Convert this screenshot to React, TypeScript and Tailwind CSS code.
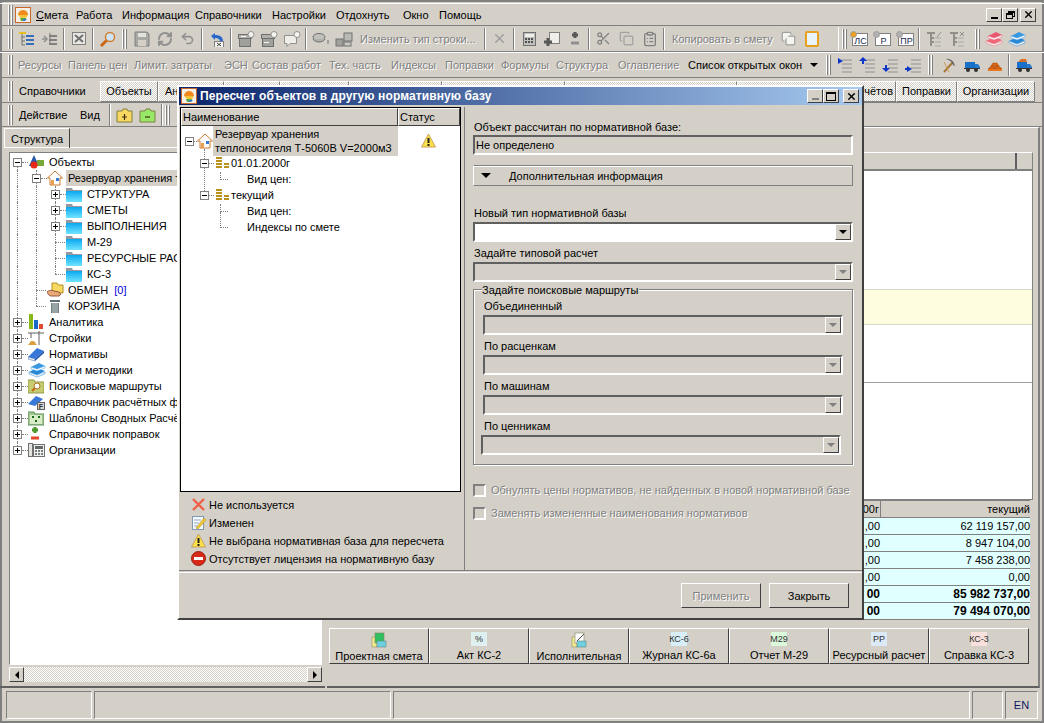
import type { ReactNode } from "react"
import { Scissors, Undo2, RefreshCw, X, Copy, ClipboardList } from "lucide-react"

const raised = "border border-t-white border-l-white border-r-[#404040] border-b-[#404040]"
const sunken = "border border-t-[#808080] border-l-[#808080] border-r-white border-b-white"
const off = "text-[#808080] [text-shadow:1px_1px_0_#fff]"

function Svg({ children, w = 16, h = 16 }: { children: ReactNode; w?: number; h?: number }) {
  return (
    <svg width={w} height={h} viewBox={`0 0 ${w} ${h}`} className="shrink-0">
      {children}
    </svg>
  )
}

const Logo = () => (
  <Svg>
    <rect x="0.5" y="0.5" width="15" height="15" fill="#f4f0e8" stroke="#c8682c" />
    <path d="M3 8a5 5 0 0 1 10 0z" fill="#f08a1c" />
    <path d="M3 8h10l-2 3H6z" fill="#f6c23a" />
    <path d="M5 11h6l-1 3H6z" fill="#58a848" />
    <path d="M8 12h4l-2 2H8z" fill="#3a78c8" />
  </Svg>
)

const TreeLines = ({ on }: { on?: boolean }) => (
  <Svg w={18}>
    {on ? <rect x="1" y="1" width="7" height="2" fill="#e8c020" /> : <path d="M1 8h5M3 5l3 3-3 3" stroke="#909090" fill="none" strokeWidth="1.5" />}
    <path d={on ? "M4 3v11M4 6h3M4 10h3M4 14h3" : "M9 2v12"} stroke="#707070" fill="none" />
    <path d="M8 5h8M8 9h8M8 13h8" stroke={on ? "#3870b8" : "#808080"} strokeWidth="2" />
  </Svg>
)

const ExcelGrey = () => (
  <Svg w={14}>
    <rect x="0.5" y="1.5" width="13" height="12" fill="#e8e6e0" stroke="#808080" />
    <path d="M3 4l8 7M11 4l-8 7" stroke="#707070" strokeWidth="2" />
  </Svg>
)

const Magnifier = () => (
  <Svg w={18}>
    <circle cx="11" cy="6" r="4.5" fill="#cfe4f4" stroke="#d08030" strokeWidth="1.5" />
    <path d="M7.5 9.5L2 15" stroke="#c86818" strokeWidth="3" />
  </Svg>
)

const Floppy = () => (
  <Svg>
    <path d="M1 1h12l2 2v12H1z" fill="#a8a8a4" stroke="#808080" />
    <rect x="4" y="2" width="8" height="4" fill="#e4e2dc" />
    <rect x="4" y="9" width="8" height="6" fill="#d4d0c8" />
  </Svg>
)

const UndoBlue = () => (
  <Svg w={18}>
    <path d="M3 5l4-3v2c5 0 8 2 8 6l-3 1c0-3-2-4-5-4v2z" fill="#2868c8" />
    <rect x="6.5" y="10.5" width="9" height="6" fill="#f4f4f0" stroke="#808080" />
    <path d="M9 12l4 3M13 12l-4 3" stroke="#404040" />
  </Svg>
)

const GearBox = ({ mark }: { mark: string }) => (
  <Svg w={18}>
    <rect x="1.5" y="3.5" width="13" height="4" fill="#b0b0ac" stroke="#707070" />
    <rect x="2.5" y="7.5" width="11" height="8" fill="#a0a09c" stroke="#707070" />
    <circle cx="14" cy="3.5" r="3" fill="#f4f4f0" stroke="#909090" />
    <path d={mark} stroke="#f8f8f4" />
  </Svg>
)

const BubbleGear = () => (
  <Svg w={18}>
    <path d="M1.5 4.5h12v8H7l-3 3v-3H1.5z" fill="#f0eee8" stroke="#909090" />
    <circle cx="14" cy="3.5" r="3" fill="#f4f4f0" stroke="#909090" />
  </Svg>
)

const Stamp = () => (
  <Svg w={18}>
    <ellipse cx="7" cy="6" rx="6" ry="3.5" fill="#c0c0bc" stroke="#707070" />
    <path d="M1 8c2 4 10 4 12 0" fill="#b0b0ac" stroke="#707070" />
    <path d="M16 9v4" stroke="#707070" />
  </Svg>
)

const Cubes = () => (
  <Svg w={18}>
    <rect x="1" y="8" width="7" height="7" fill="#a0a09c" stroke="#707070" />
    <rect x="9" y="2" width="8" height="8" fill="#b8b8b4" stroke="#707070" />
    <rect x="9" y="11" width="7" height="4" fill="#c8c8c4" stroke="#707070" />
  </Svg>
)

const Calc = () => (
  <Svg w={18}>
    <rect x="3.5" y="1.5" width="12" height="13" fill="#c0c0bc" stroke="#707070" />
    <rect x="5" y="3" width="9" height="3" fill="#f0eee8" />
    <path d="M5 8h2M8 8h2M11 8h2M5 11h2M8 11h2M11 11h2" stroke="#505050" strokeWidth="2" />
  </Svg>
)

const DocPlus = () => (
  <Svg w={18}>
    <rect x="6.5" y="1.5" width="10" height="11" fill="#f0eee8" stroke="#808080" />
    <path d="M1 11h8M5 7v8" stroke="#585858" strokeWidth="3" />
  </Svg>
)

const PlusMinus = ({ on }: { on?: boolean }) => (
  <Svg w={14}>
    <path d="M7 1v6M4 4h6" stroke={on ? "#489828" : "#585858"} strokeWidth="3" />
    <path d="M3 12h8" stroke={on ? "#e04828" : "#909090"} strokeWidth="3" />
  </Svg>
)

const DocGear = ({ label }: { label: string }) => (
  <Svg w={18}>
    <rect x="2.5" y="2.5" width="15" height="12" fill="#fff" stroke="#808080" />
    <circle cx="3.5" cy="3.5" r="3" fill={label === "ЛС" ? "#f0a020" : "#b0b0b0"} stroke="#a0a0a0" />
    <text x="10.5" y="13" fontSize="9" textAnchor="middle" fill="#202850" fontFamily="Liberation Sans">{label}</text>
  </Svg>
)

const TreeEdit = ({ cross }: { cross?: boolean }) => (
  <Svg w={18}>
    <path d="M2 2h8M6 2v13M6 7h3M6 11h3" stroke="#909088" strokeWidth="2" fill="none" />
    <path d="M10 7h6M10 11h6M10 15h6" stroke="#a8a8a0" />
    <path d={cross ? "M12 1l4 4M16 1l-4 4" : "M12 6l4-5"} stroke="#909088" />
  </Svg>
)

const BooksTop = ({ a, b }: { a: string; b: string }) => (
  <Svg w={18}>
    <path d="M1 10l8-4 8 3-8 4z" fill={a} />
    <path d="M1 10l8 3 8-3v2l-8 3-8-3z" fill="#f4f4f4" stroke={a} strokeWidth="0.5" />
    <path d="M3 5l8-4 6 3-8 3z" fill={b} />
    <path d="M3 5l6 2 8-3v2l-8 3-6-2z" fill="#fff" stroke={b} strokeWidth="0.5" />
  </Svg>
)

const IndentIcon = ({ arrow }: { arrow: "ur" | "ul" | "dl" | "dr" }) => {
  const paths = {
    ur: "M2 1l5 3-5 3z",
    ul: "M4 0l4 4H5v3H3V4H0z",
    dl: "M4 15l4-4H5V8H3v3H0z",
    dr: "M7 12l-5-3v2H0v2h2v2z",
  }
  return (
    <Svg w={17}>
      <path d="M6 3h10M6 7h10M6 11h10M6 15h10" stroke="#909090" />
      <path d={paths[arrow]} fill="#1038c8" />
    </Svg>
  )
}

const Hammer = () => (
  <Svg>
    <path d="M3 15L12 5" stroke="#a87838" strokeWidth="2" />
    <path d="M5 2c4-1 8 2 9 7l-2-1c-1-3-3-5-7-6z" fill="#686868" />
    <path d="M3 5l5 10" stroke="#c89850" />
  </Svg>
)

const Truck = ({ full }: { full?: boolean }) => (
  <Svg>
    {full && <path d="M2 5l3-3h5l1 3z" fill="#d87028" />}
    <rect x="1" y="5" width="10" height="6" fill="#1870c8" />
    <path d="M11 7h3l2 3v2h-5z" fill="#2878d0" />
    <rect x="0" y="11" width="16" height="1" fill="#383838" />
    <circle cx="4" cy="13" r="2" fill="#303030" />
    <circle cx="12" cy="13" r="2" fill="#303030" />
  </Svg>
)

const Bricks = () => (
  <Svg>
    <path d="M1 12l3-3h3l2 3zM6 12l3-3h3l3 3zM4 9l2-3h4l2 3z" fill="#d86818" stroke="#a84808" strokeWidth="0.5" />
    <rect x="1" y="12" width="14" height="2" fill="#e87820" />
  </Svg>
)

const FolderSmall = ({ color, mark }: { color: string; mark: string }) => (
  <Svg w={17}>
    <path d="M1 4h5l1-2h4l1 2h4v11H1z" fill={color} stroke="#808040" />
    <path d={mark} stroke="#403010" strokeWidth="1.2" />
  </Svg>
)

const Triad = () => (
  <Svg w={17}>
    <path d="M6 1l5 11H1z" fill="#2858a8" />
    <rect x="9" y="6" width="7" height="6" fill="#78a838" />
    <circle cx="6" cy="11" r="3.5" fill="#e82818" />
  </Svg>
)

const House = () => (
  <Svg>
    <path d="M8 1L0.5 8H3v7h10V8h2.5z" fill="#fff" stroke="#c87830" />
    <rect x="4" y="10" width="3" height="5" fill="#e8a050" />
    <rect x="9" y="8" width="3" height="3" fill="#3878d8" />
  </Svg>
)

const BlueFolder = () => (
  <Svg>
    <path d="M0 2h6l1 2h9v11H0z" fill="#9898a0" />
    <rect x="0" y="5" width="16" height="11" fill="url(#fold)" />
    <defs>
      <linearGradient id="fold" x1="0" y1="0" x2="0" y2="1">
        <stop offset="0" stopColor="#0aa8f0" />
        <stop offset="1" stopColor="#70e4ff" />
      </linearGradient>
    </defs>
  </Svg>
)

const HandFolder = () => (
  <Svg w={18}>
    <path d="M5 1h5l1 2h5v8H5z" fill="#f8d860" stroke="#b09020" />
    <path d="M0 10c2-2 5-2 7-1l5 1c2 1 2 3 0 4H4c-2 0-3-2-4-4z" fill="#e8a878" stroke="#985838" />
  </Svg>
)

const Trash = () => (
  <Svg>
    <rect x="3" y="2" width="10" height="2" fill="#607070" />
    <rect x="4" y="5" width="8" height="10" fill="#708080" />
    <path d="M6 5v10M8 5v10M10 5v10" stroke="#c0c8c8" />
  </Svg>
)

const Bars = () => (
  <Svg>
    <rect x="1" y="0" width="4" height="15" fill="#88b818" />
    <rect x="6" y="6" width="4" height="9" fill="#1868c8" />
    <rect x="11" y="10" width="4" height="5" fill="#e04830" />
  </Svg>
)

const Crane = () => (
  <Svg>
    <path d="M0 3h16M11 1v14M3 3v5" stroke="#606060" fill="none" />
    <path d="M0 15l3-4h3l3 4z" fill="#d8a040" />
  </Svg>
)

const BookBlue = () => (
  <Svg>
    <path d="M0 11l9-9 7 3-9 8z" fill="#3878d8" />
    <path d="M0 11l7 2v2l-7-2z" fill="#f4f8ff" stroke="#3060a8" strokeWidth="0.5" />
    <path d="M7 13l9-8v2l-9 8z" fill="#1850a8" />
  </Svg>
)

const SearchFolder = () => (
  <Svg>
    <path d="M0 2h6l1 2h9v11H0z" fill="#c8cc70" stroke="#90984a" />
    <circle cx="9" cy="8" r="3" fill="#fff" stroke="#b07020" />
    <path d="M7 10l-3 3" stroke="#c06818" strokeWidth="2" />
  </Svg>
)

const BookF = () => (
  <Svg w={17}>
    <path d="M0 10l8-8 7 3-8 7z" fill="#3878d8" />
    <rect x="9.5" y="8.5" width="7" height="7" fill="#d8d8d0" stroke="#606060" />
    <text x="13" y="15" fontSize="7" fontWeight="700" textAnchor="middle" fill="#303030" fontFamily="Liberation Sans">F</text>
  </Svg>
)

const TemplateFolder = () => (
  <Svg>
    <path d="M0 2h6l1 2h9v11H0z" fill="#a0c890" stroke="#609060" />
    <rect x="2" y="5" width="12" height="9" fill="#d8ecc8" />
    <path d="M4 6h2v2H4zM10 6h2v2h-2zM7 10h2v2H7z" fill="#186818" />
  </Svg>
)

const Phone = () => (
  <Svg w={17}>
    <rect x="0.5" y="1.5" width="4" height="13" fill="#e4e4e0" stroke="#707070" />
    <rect x="5.5" y="2.5" width="11" height="12" fill="#f0f0ec" stroke="#707070" />
    <rect x="7" y="4" width="8" height="3" fill="#606868" />
    <path d="M7 9h2M10 9h2M13 9h2M7 12h2M10 12h2M13 12h2" stroke="#505858" strokeWidth="1.5" />
  </Svg>
)

const Coins = () => (
  <Svg w={14}>
    <path d="M1 3h6M1 6h6M1 9h6M1 12h6M9 9h5M9 12h5" stroke="#b8901c" strokeWidth="2" />
  </Svg>
)

const Warn = () => (
  <Svg w={15}>
    <path d="M7.500 1L14.500 14H0.500z" fill="#fbe048" stroke="#c8a060" />
    <path d="M7.500 5v5" stroke="#202020" strokeWidth="2" />
    <rect x="6.500" y="11" width="2" height="2" fill="#202020" />
  </Svg>
)

const NoteEdit = () => (
  <Svg>
    <rect x="1.500" y="1.500" width="11" height="13" fill="#f4f8ff" stroke="#8098b0" />
    <path d="M3 5h7M3 8h5M3 11h4" stroke="#90a8c0" />
    <path d="M5 13l8-10 2 2-8 9z" fill="#f0c830" stroke="#b08820" strokeWidth="0.5" />
  </Svg>
)

const NoEntry = () => (
  <Svg w={15}>
    <circle cx="7.500" cy="7.500" r="7" fill="#d82818" stroke="#982010" />
    <rect x="3" y="6" width="9" height="3" fill="#fff" />
  </Svg>
)

const RedCross = () => (
  <Svg w={15}>
    <path d="M2 2l11 11M13 2L2 13" stroke="#f06048" strokeWidth="2.400" />
  </Svg>
)

const CellsIcon = ({ percent }: { percent?: boolean }) => (
  <Svg>
    <rect x="1" y="5" width="5" height="10" fill="#f0e890" stroke="#909060" strokeWidth="0.6" />
    <rect x="4" y="1" width="9" height="10" fill={percent ? "#fff" : "#30c060"} stroke="#808860" strokeWidth="0.6" />
    <rect x="6" y="9" width="9" height="6" fill="#70d0e0" stroke="#608888" strokeWidth="0.6" />
    {percent && <path d="M6 9l7-7" stroke="#505050" />}
  </Svg>
)

const LabelIcon = ({ text, bg }: { text: string; bg: string }) => (
  <span className={`flex h-[14px] w-[16px] items-center justify-center text-[9px] leading-none text-[#303030] ${bg}`}>{text}</span>
)

const Grip = () => (
  <span className="flex h-[20px] shrink-0 gap-px">
    <span className="w-[2px] border-l border-l-white border-r border-r-[#808080]" />
    <span className="w-[2px] border-l border-l-white border-r border-r-[#808080]" />
  </span>
)

const Sep = () => <span className="mx-[2px] h-[22px] w-[2px] shrink-0 border-l border-l-[#808080] border-r border-r-white" />

const Slot = ({ children }: { children: ReactNode }) => (
  <span className="flex h-[22px] w-[23px] shrink-0 items-center justify-center">{children}</span>
)

const MiniGlyph = ({ children }: { children: ReactNode }) => (
  <span className="flex h-[14px] w-[16px] items-center justify-center border border-t-white border-l-white border-r-[#404040] border-b-[#404040] bg-[#d4d0c8] text-[10px] leading-none text-black">
    {children}
  </span>
)

const menuItems = [
  ["Смета", "w-[40px]"],
  ["Работа", "w-[46px]"],
  ["Информация", "w-[73px]"],
  ["Справочники", "w-[77px]"],
  ["Настройки", "w-[64px]"],
  ["Отдохнуть", "w-[67px]"],
  ["Окно", "w-[36px]"],
  ["Помощь", "w-[56px]"],
]

const barTexts = [
  ["Ресурсы", "w-[50px]"],
  ["Панель цен", "w-[66px]"],
  ["Лимит. затраты", "w-[90px]"],
  ["ЭСН", "w-[28px]"],
  ["Состав работ", "w-[77px]"],
  ["Тех. часть", "w-[62px]"],
  ["Индексы", "w-[54px]"],
  ["Поправки", "w-[56px]"],
  ["Формулы", "w-[55px]"],
  ["Структура", "w-[62px]"],
  ["Оглавление", "w-[70px]"],
]

// the middle tabs sit behind the dialog, only their edges show
const tabs = [
  ["Объекты", "w-[58px] justify-center"],
  ["Ан", "w-[66px] pl-[6px]"],
  ["", "w-[56px]"],
  ["", "w-[69px]"],
  ["", "w-[93px]"],
  ["", "w-[123px]"],
  ["", "w-[172px]"],
  ["чётов", "w-[159px] justify-end pr-[2px]"],
  ["Поправки", "w-[61px] justify-center"],
  ["Организации", "w-[78px] justify-center"],
]

function MenuBar() {
  return (
    <div className="flex h-[22px] items-center border-t border-white pl-[8px]">
      <Grip />
      <span className="ml-[2px] mr-[5px]"><Logo /></span>
      {menuItems.map(([label, width]) => (
        <span key={label} className={`whitespace-nowrap ${width}`}>
          {label === "Смета" ? <><span className="underline">С</span>мета</> : label}
        </span>
      ))}
      <div className="ml-auto mr-[8px] flex">
        <MiniGlyph><span className="mt-[6px] h-[2px] w-[7px] bg-black" /></MiniGlyph>
        <MiniGlyph>
          <span className="relative h-[8px] w-[9px]">
            <span className="absolute right-0 top-0 h-[6px] w-[7px] border border-t-2 border-black" />
            <span className="absolute bottom-0 left-0 h-[6px] w-[7px] border border-t-2 border-black bg-[#d4d0c8]" />
          </span>
        </MiniGlyph>
        <span className="ml-[2px]"><MiniGlyph><X size={11} strokeWidth={3} /></MiniGlyph></span>
      </div>
    </div>
  )
}

function ToolRowOne() {
  return (
    <div className="flex h-[27px] items-center border-y border-t-[#808080] border-b-[#808080] pl-[8px]">
      <Grip />
      <span className="w-[2px]" />
      <Slot><TreeLines on /></Slot>
      <Slot><TreeLines /></Slot>
      <Sep />
      <Slot><ExcelGrey /></Slot>
      <Sep />
      <Slot><Magnifier /></Slot>
      <span className="ml-[3px] mr-[3px]"><Grip /></span>
      <Slot><Floppy /></Slot>
      <Slot><RefreshCw size={16} strokeWidth={3} color="#909090" /></Slot>
      <Slot><Undo2 size={15} strokeWidth={2.5} color="#909090" /></Slot>
      <Sep />
      <Slot><UndoBlue /></Slot>
      <Sep />
      <Slot><GearBox mark="M4 5.500h5" /></Slot>
      <Slot><GearBox mark="M4 11.500h5" /></Slot>
      <Slot><BubbleGear /></Slot>
      <Sep />
      <Slot><Stamp /></Slot>
      <Slot><Cubes /></Slot>
      <span className={`w-[127px] whitespace-nowrap pl-[5px] ${off}`}>Изменить тип строки...</span>
      <Sep />
      <Slot><X size={15} strokeWidth={2.5} color="#a0a0a0" /></Slot>
      <Sep />
      <Slot><Calc /></Slot>
      <Slot><DocPlus /></Slot>
      <Slot><PlusMinus /></Slot>
      <Sep />
      <Slot><Scissors size={15} color="#808080" /></Slot>
      <Slot><Copy size={15} color="#a0a0a0" /></Slot>
      <Slot><ClipboardList size={16} color="#808080" /></Slot>
      <Sep />
      <span className={`w-[110px] whitespace-nowrap pl-[5px] ${off}`}>Копировать в смету</span>
      <Slot><Copy size={15} color="#a0a0a0" fill="#f4f4f0" /></Slot>
      <Slot>
        <span className="h-[16px] w-[14px] rounded-[2px] border-2 border-[#e8a020] bg-[#e8f4f8]" />
      </Slot>
      <span className="ml-[15px] h-[24px] w-px bg-white" />
      <span className="ml-[3px]"><Grip /></span>
      <Slot><DocGear label="ЛС" /></Slot>
      <Slot><DocGear label="Р" /></Slot>
      <Slot><DocGear label="ПР" /></Slot>
      <Sep />
      <Slot><TreeEdit /></Slot>
      <Slot><TreeEdit cross /></Slot>
      <span className="ml-[7px] mr-[2px]"><Grip /></span>
      <Slot><BooksTop a="#f06878" b="#e85870" /></Slot>
      <Slot><BooksTop a="#2888d8" b="#3898e0" /></Slot>
    </div>
  )
}

function ToolRowTwo() {
  return (
    <div className="flex h-[26px] items-center border-b border-b-[#808080] border-t border-t-white pl-[8px]">
      <Grip />
      <span className="w-[5px]" />
      {barTexts.map(([label, width]) => (
        <span key={label} className={`whitespace-nowrap ${off} ${width}`}>{label}</span>
      ))}
      <span className="w-[122px] whitespace-nowrap">Список открытых окон</span>
      <span className="h-0 w-0 border-x-[4px] border-t-[4px] border-x-transparent border-t-black" />
      <span className="ml-[8px]"><Grip /></span>
      <span className="w-[2px]" />
      <Slot><IndentIcon arrow="ur" /></Slot>
      <Slot><IndentIcon arrow="ul" /></Slot>
      <Slot><IndentIcon arrow="dl" /></Slot>
      <Slot><IndentIcon arrow="dr" /></Slot>
      <span className="ml-[3px] mr-[4px]"><Grip /></span>
      <Slot><Hammer /></Slot>
      <Slot><Truck /></Slot>
      <Slot><Bricks /></Slot>
      <Sep />
      <Slot><Truck full /></Slot>
    </div>
  )
}

function TabRow() {
  const tab = "flex h-[21px] items-center border border-t-white border-l-white border-r-[#808080] border-b-[#808080] bg-[repeating-conic-gradient(#fff_0_25%,#d4d0c8_0_50%)] bg-[length:2px_2px] whitespace-nowrap overflow-hidden"
  return (
    <div className="mt-[2px] flex h-[22px] items-center pl-[8px]">
      <Grip />
      <span className="w-[87px] pl-[6px] whitespace-nowrap">Справочники</span>
      {tabs.map(([label, width]) => (
        <span key={width} className={`${tab} ${width}`}>{label}</span>
      ))}
    </div>
  )
}

function ActionRow() {
  return (
    <div className="flex h-[25px] items-center border-y border-t-[#808080] border-b-[#808080] pl-[8px]">
      <Grip />
      <span className="w-[67px] pl-[6px]">Действие</span>
      <span className="w-[27px]">Вид</span>
      <Sep />
      <Slot><FolderSmall color="#f8d860" mark="M6 10h5M8.500 7v6" /></Slot>
      <Slot><FolderSmall color="#98e868" mark="M6 10h5" /></Slot>
      <Sep />
      <Grip />
    </div>
  )
}

type TreeRowProps = {
  guides?: number[]
  box?: "+" | "-"
  icon?: ReactNode
  children: ReactNode
  selected?: boolean
  cap?: "top" | "bottom"
}

const ExpandBox = ({ kind }: { kind: "+" | "-" }) => (
  <span className="relative z-10 flex h-[9px] w-[9px] shrink-0 items-center justify-center border border-[#808080] bg-white">
    <span className="h-px w-[5px] bg-black" />
    {kind === "+" && <span className="absolute h-[5px] w-px bg-black" />}
  </span>
)

// cap: the guide of this row stops half way (first or last child of a branch)
function TreeRow({ guides = [], box, icon, children, selected, cap }: TreeRowProps) {
  const line = cap === "top" ? "top-[8px] h-[8px]" : cap === "bottom" ? "top-0 h-[8px]" : "top-0 h-4"
  return (
    <div className="flex h-4 items-center whitespace-nowrap">
      {guides.map((on, i) => (
        <span key={i} className="flex h-4 w-[19px] shrink-0 pl-[4px]">
          {on === 1 && <span className="h-4 border-l border-dotted border-[#808080]" />}
        </span>
      ))}
      <span className="relative flex h-4 w-[15px] shrink-0 items-center">
        <span className={`absolute left-[4px] border-l border-dotted border-[#808080] ${line}`} />
        {box ? <ExpandBox kind={box} /> : <span className="ml-[4px] h-px w-[10px] border-t border-dotted border-[#808080]" />}
        {box && <span className="h-px w-[6px] border-t border-dotted border-[#808080]" />}
      </span>
      <span className="flex w-[21px] shrink-0 justify-start">{icon}</span>
      <span className={selected ? "ml-[-2px] bg-[#d4d0c8] px-[2px]" : ""}>{children}</span>
    </div>
  )
}

function LeftPanel() {
  return (
    <div className="flex w-[325px] shrink-0 flex-col border-b-2 border-[#606060] pl-[4px]">
      <div className="mt-[1px] flex h-[20px] border-b border-white">
        <span className="flex h-[20px] w-[66px] items-center justify-center border border-b-0 border-t-white border-l-white border-r-[#404040]">Структура</span>
      </div>
      <div className={`ml-[5px] mr-[3px] mt-[4px] flex flex-1 flex-col overflow-hidden bg-white pl-[3px] pt-[1px] ${sunken} border-t-[#404040] border-l-[#404040]`}>
        <div>
          <TreeRow box="-" icon={<Triad />} cap="top">Объекты</TreeRow>
          <TreeRow guides={[1]} box="-" icon={<House />} selected>Резервуар хранения т</TreeRow>
          <TreeRow guides={[1, 1]} box="+" icon={<BlueFolder />}>СТРУКТУРА</TreeRow>
          <TreeRow guides={[1, 1]} box="+" icon={<BlueFolder />}>СМЕТЫ</TreeRow>
          <TreeRow guides={[1, 1]} box="+" icon={<BlueFolder />}>ВЫПОЛНЕНИЯ</TreeRow>
          <TreeRow guides={[1, 1]} icon={<BlueFolder />}>М-29</TreeRow>
          <TreeRow guides={[1, 1]} icon={<BlueFolder />}>РЕСУРСНЫЕ РАС</TreeRow>
          <TreeRow guides={[1, 1]} icon={<BlueFolder />} cap="bottom">КС-3</TreeRow>
          <TreeRow guides={[1]} icon={<HandFolder />}>ОБМЕН <span className="ml-[3px] text-[#0000e0]">[0]</span></TreeRow>
          <TreeRow guides={[1]} icon={<Trash />} cap="bottom">КОРЗИНА</TreeRow>
          <TreeRow box="+" icon={<Bars />}>Аналитика</TreeRow>
          <TreeRow box="+" icon={<Crane />}>Стройки</TreeRow>
          <TreeRow box="+" icon={<BookBlue />}>Нормативы</TreeRow>
          <TreeRow box="+" icon={<BooksTop a="#2888d8" b="#3898e0" />}>ЭСН и методики</TreeRow>
          <TreeRow box="+" icon={<SearchFolder />}>Поисковые маршруты</TreeRow>
          <TreeRow box="+" icon={<BookF />}>Справочник расчётных ф</TreeRow>
          <TreeRow box="+" icon={<TemplateFolder />}>Шаблоны Сводных Расчё</TreeRow>
          <TreeRow box="+" icon={<PlusMinus on />}>Справочник поправок</TreeRow>
          <TreeRow box="+" icon={<Phone />} cap="bottom">Организации</TreeRow>
        </div>
      </div>
      <div className="ml-[5px] mr-[3px] mb-[4px] mt-[2px] flex h-[15px] items-center bg-[repeating-conic-gradient(#fff_0_25%,#d4d0c8_0_50%)] bg-[length:2px_2px]">
        <span className={`flex h-[15px] w-[15px] items-center justify-center bg-[#d4d0c8] ${raised}`}>
          <span className="h-0 w-0 border-y-[4px] border-r-[4px] border-y-transparent border-r-black" />
        </span>
        <span className={`ml-auto flex h-[15px] w-[15px] items-center justify-center bg-[#d4d0c8] ${raised}`}>
          <span className="h-0 w-0 border-y-[4px] border-l-[4px] border-y-transparent border-l-black" />
        </span>
      </div>
    </div>
  )
}

const summary = [
  { value: "62 119 157,00" },
  { value: "8 947 104,00" },
  { value: "7 458 238,00" },
  { value: "0,00" },
  { value: "85 982 737,00", bold: true },
  { value: "79 494 070,00", bold: true },
]

const reportButtons = [
  { label: "Проектная смета", icon: <CellsIcon /> },
  { label: "Акт КС-2", icon: <LabelIcon text="%" bg="bg-[#dff0f0]" /> },
  { label: "Исполнительная", icon: <CellsIcon percent /> },
  { label: "Журнал КС-6а", icon: <LabelIcon text="КС-6" bg="bg-[#d8eef8]" /> },
  { label: "Отчет М-29", icon: <LabelIcon text="М29" bg="bg-[#dcf8dc]" /> },
  { label: "Ресурсный расчет", icon: <LabelIcon text="РР" bg="bg-[#dceaf8]" /> },
  { label: "Справка КС-3", icon: <LabelIcon text="КС-3" bg="bg-[#f8e0dc]" /> },
]

function RightPanel() {
  return (
    <div className="ml-[2px] mr-[4px] flex flex-1 flex-col border-b-2 border-r-2 border-t border-b-[#606060] border-r-[#808080] border-t-white pl-[2px]">
      <div className="mr-[5px] mt-[24px] flex flex-1 flex-col border border-t-white border-l-white border-r-[#808080] border-b-[#808080] bg-white">
        <div className="flex h-[18px] shrink-0 border-b-2 border-[#808080] bg-[#d4d0c8]">
          <span className="w-[687px] border-r-2 border-[#606060]" />
          <span className="flex-1" />
        </div>
        <div className="flex flex-1 flex-col pt-[118px]">
          <div className="h-[36px] border-y border-[#d8d8c8] bg-[#fffde0]" />
          <div className="h-[58px] border-b border-[#a0a0a0]" />
        </div>
      </div>
      <div className="mr-[8px] flex flex-col border-t border-[#808080]">
        <div className="grid h-[17px] grid-cols-[552px_1fr] border-b border-[#808080] bg-[#d4d0c8]">
          <span className="border-r border-[#808080] pr-[1px] text-right">00г</span>
          <span className="text-right">текущий</span>
        </div>
        {summary.map((row) => (
          <div key={row.value} className={`grid h-[17px] grid-cols-[552px_1fr] items-center border-b border-[#808080] bg-[#e0ffff] ${row.bold ? "text-[12px] font-bold" : ""}`}>
            <span className="pr-[1px] text-right">{row.bold ? "00" : ",00"}</span>
            <span className="text-right">{row.value}</span>
          </div>
        ))}
      </div>
      <div className="mb-[22px] mt-[8px] flex">
        {reportButtons.map((button) => (
          <div key={button.label} className={`flex h-[36px] w-[100px] flex-col items-center justify-between bg-[#d4d0c8] pt-[3px] ${raised}`}>
            {button.icon}
            <span className="whitespace-nowrap leading-[16px]">{button.label}</span>
          </div>
        ))}
      </div>
    </div>
  )
}

function StatusBar() {
  return (
    <div className="mt-[3px] flex h-[28px] gap-[2px] pl-[6px] pr-[6px]">
      <span className={`w-[86px] ${sunken}`} />
      <span className={`w-[297px] ${sunken}`} />
      <span className={`w-[577px] ${sunken}`} />
      <span className={`w-[31px] ${sunken}`} />
      <span className={`flex flex-1 items-center justify-center text-[#101860] ${sunken}`}>EN</span>
    </div>
  )
}

const Combo = ({ disabled, white, indent }: { disabled?: boolean; white?: boolean; indent?: string }) => (
  <div className={`flex h-[20px] items-center justify-end border-2 border-t-[#606060] border-l-[#606060] border-r-white border-b-white ${white ? "bg-white" : ""} ${indent ?? ""}`}>
    <span className={`flex h-[16px] w-[16px] items-center justify-center bg-[#d4d0c8] ${raised}`}>
      <span className={`h-0 w-0 border-x-[4px] border-t-[4px] border-x-transparent ${disabled ? "border-t-[#808080]" : "border-t-black"}`} />
    </span>
  </div>
)

const GroupLabel = ({ children, top }: { children: ReactNode; top: string }) => (
  <div className={`pl-[1px] leading-[14px] ${top}`}>{children}</div>
)

const DlgHead = ({ children, width }: { children: ReactNode; width: string }) => (
  <span className={`flex h-[18px] items-center pl-[1px] ${width} border border-t-white border-l-white border-r-[#404040] border-b-[#404040]`}>{children}</span>
)

const DlgTreeRow = ({ box, icon, children, lead, elbow, tall }: { box?: boolean; icon?: ReactNode; children: ReactNode; lead: string; elbow?: boolean; tall?: boolean }) => (
  <div className={`flex h-4 items-center whitespace-nowrap ${lead}`}>
    {box && <ExpandBox kind="-" />}
    {box && <span className="mr-[1px] h-px w-[5px] border-t border-dotted border-[#808080]" />}
    {elbow && (
      <span className="relative mr-[19px] h-px w-[8px] border-t border-dotted border-[#808080]">
        <span className={`absolute bottom-0 left-0 border-l border-dotted border-[#808080] ${tall ? "h-[16px]" : "h-[8px]"}`} />
      </span>
    )}
    {icon && <span className="mr-[2px]">{icon}</span>}
    {children}
  </div>
)

const legend = [
  { icon: <RedCross />, text: "Не используется" },
  { icon: <NoteEdit />, text: "Изменен" },
  { icon: <Warn />, text: "Не выбрана нормативная база для пересчета" },
  { icon: <NoEntry />, text: "Отсутствует лицензия на нормативную базу" },
]

function Dialog() {
  return (
    <div className="absolute left-[177px] top-[85px] flex h-[535px] w-[687px] flex-col border-2 border-t-white border-l-white border-r-[#404040] border-b-[#404040] bg-[#d4d0c8]">
      <div className="flex h-[18px] shrink-0 items-center bg-[linear-gradient(to_right,#0a246a,#a6caf0)] pl-[2px] pr-[3px]">
        <Logo />
        <span className="ml-[3px] whitespace-nowrap text-[12px] font-bold tracking-[0.1px] text-white">Пересчет объектов в другую нормативную базу</span>
        <div className="ml-auto flex">
          <MiniGlyph><span className="mt-[6px] h-[2px] w-[7px] bg-[#808080]" /></MiniGlyph>
          <MiniGlyph><span className="h-[9px] w-[10px] border border-t-2 border-black" /></MiniGlyph>
          <span className="ml-[4px]"><MiniGlyph><X size={11} strokeWidth={3} /></MiniGlyph></span>
        </div>
      </div>
      <div className="flex min-h-0 flex-1 pt-[2px]">
        <div className="ml-[1px] flex w-[285px] shrink-0 flex-col border-r border-[#808080]">
          <div className="flex h-[385px] w-[281px] flex-col border border-black bg-white">
            <div className="flex shrink-0 bg-[#d4d0c8]">
              <DlgHead width="w-[217px]">Наименование</DlgHead>
              <DlgHead width="flex-1">Статус</DlgHead>
            </div>
            <div className="flex h-[30px] items-center pl-[4px]">
              <ExpandBox kind="-" />
              <span className="h-px w-[3px] border-t border-dotted border-[#808080]" />
              <House />
              <div className="h-[30px] w-[185px] whitespace-nowrap bg-[#d4d0c8] pl-[2px] pt-[1px] leading-[14px]">
                Резервуар хранения<br />теплоносителя Т-5060В V=2000м3
              </div>
              <span className="ml-[23px]"><Warn /></span>
            </div>
            <div className="relative mt-[-1px]">
              <span className="absolute left-[23px] top-[-6px] h-[46px] border-l border-dotted border-[#808080]" />
              <DlgTreeRow box icon={<Coins />} lead="pl-[19px]">01.01.2000г</DlgTreeRow>
              <DlgTreeRow elbow lead="pl-[39px]">Вид цен:</DlgTreeRow>
              <DlgTreeRow box icon={<Coins />} lead="pl-[19px]">текущий</DlgTreeRow>
              <DlgTreeRow elbow lead="pl-[39px]">Вид цен:</DlgTreeRow>
              <DlgTreeRow elbow tall lead="pl-[39px]">Индексы по смете</DlgTreeRow>
            </div>
          </div>
          <div className="mt-[4px] flex flex-col pl-[11px]">
            {legend.map((row) => (
              <div key={row.text} className="flex h-[18px] items-center gap-[3px] whitespace-nowrap">
                <span className="flex w-[15px] justify-center">{row.icon}</span>
                {row.text}
              </div>
            ))}
          </div>
        </div>
        <div className="flex min-w-0 flex-1 flex-col pl-[8px] pr-[9px] pt-[13px]">
          <div className="pl-[1px] leading-[14px]">Объект рассчитан по нормативной базе:</div>
          <div className="mt-[1px] flex h-[20px] items-center border-2 border-t-[#606060] border-l-[#606060] border-r-white border-b-white pl-[1px]">Не определено</div>
          <div className="mt-[10px] flex h-[21px] items-center border border-t-[#808080] border-l-white border-r-[#808080] border-b-[#808080] shadow-[inset_0_1px_0_#fff]">
            <span className="ml-[7px] h-0 w-0 border-x-[5px] border-t-[5px] border-x-transparent border-t-black" />
            <span className="ml-[18px]">Дополнительная информация</span>
          </div>
          <GroupLabel top="mt-[20px]">Новый тип нормативной базы</GroupLabel>
          <div className="mt-[2px]"><Combo white /></div>
          <GroupLabel top="mt-[4px]">Задайте типовой расчет</GroupLabel>
          <div className="mt-[2px]"><Combo disabled /></div>
          <div className="relative mt-[7px] flex h-[176px] flex-col border border-[#808080] px-[9px] shadow-[inset_1px_1px_0_#fff,1px_1px_0_#fff]">
            <span className="absolute left-[8px] top-[-7px] bg-[#d4d0c8] pr-[1px] leading-[14px]">Задайте поисковые маршруты</span>
            <GroupLabel top="mt-[9px] pl-0">Объединенный</GroupLabel>
            <div className="mt-[2px]"><Combo disabled /></div>
            <GroupLabel top="mt-[4px] pl-0">По расценкам</GroupLabel>
            <div className="mt-[2px]"><Combo disabled /></div>
            <GroupLabel top="mt-[4px] pl-0">По машинам</GroupLabel>
            <div className="mt-[2px]"><Combo disabled /></div>
            <GroupLabel top="mt-[4px] pl-0">По ценникам</GroupLabel>
            <div className="mt-[2px]"><Combo disabled indent="ml-[-2px] mr-[2px]" /></div>
          </div>
          <label className="mt-[18px] flex h-[14px] items-center">
            <span className="h-[13px] w-[13px] border-2 border-t-[#808080] border-l-[#808080] border-r-white border-b-white" />
            <span className={`ml-[5px] whitespace-nowrap ${off}`}>Обнулять цены нормативов, не найденных в новой нормативной базе</span>
          </label>
          <label className="mt-[9px] flex h-[14px] items-center">
            <span className="h-[13px] w-[13px] border-2 border-t-[#808080] border-l-[#808080] border-r-white border-b-white" />
            <span className={`ml-[5px] whitespace-nowrap ${off}`}>Заменять измененные наименования нормативов</span>
          </label>
        </div>
      </div>
      <div className="h-[3px] shrink-0 border-y border-t-[#808080] border-b-white" />
      <div className="flex h-[45px] shrink-0 items-start justify-end gap-[8px] pr-[13px] pt-[10px]">
        <span className={`flex h-[25px] w-[80px] items-center justify-center ${off} ${raised}`}>Применить</span>
        <span className={`flex h-[25px] w-[80px] items-center justify-center ${raised}`}>Закрыть</span>
      </div>
    </div>
  )
}

export default function App() {
  return (
    <div className="relative flex h-[723px] w-[1044px] flex-col overflow-hidden bg-[#d4d0c8] pb-[4px] pt-[3px] font-['Liberation_Sans',sans-serif] text-[11px] leading-[16px] text-black shadow-[inset_0_0_0_2px_#808080]">
      <MenuBar />
      <ToolRowOne />
      <ToolRowTwo />
      <TabRow />
      <ActionRow />
      <div className="flex min-h-0 flex-1">
        <LeftPanel />
        <RightPanel />
      </div>
      <StatusBar />
      <Dialog />
    </div>
  )
}
